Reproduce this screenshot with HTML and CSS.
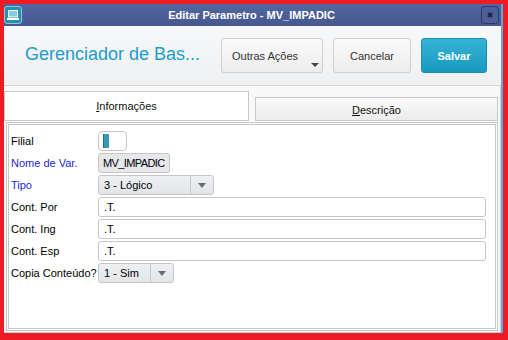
FILE: index.html
```html
<!DOCTYPE html>
<html lang="pt">
<head>
<meta charset="utf-8">
<title>Editar Parametro</title>
<link rel="stylesheet" href="styles.css">
</head>
<body>
<div class="window">
  <div class="titlebar">
    <span class="app-icon">
      <svg width="18" height="18" viewBox="0 0 18 18">
        <rect x="0.5" y="0.5" width="17" height="17" rx="2.5" fill="#2a8db1" stroke="#86c9dc"/>
        <rect x="4.5" y="4.5" width="9" height="6.5" fill="#7fcbe0" stroke="#ffffff"/>
        <rect x="3" y="12" width="12" height="2" fill="#ffffff"/>
      </svg>
    </span>
    <span class="title">Editar Parametro - MV_IMPADIC</span>
    <span class="close">
      <svg width="18" height="18" viewBox="0 0 18 18">
        <rect x="0.5" y="0.5" width="17" height="17" rx="3" fill="#4d5f96" stroke="#2c3b68"/>
        <path d="M7 7 L11 11 M11 7 L7 11" stroke="#1b2440" stroke-width="2"/>
      </svg>
    </span>
  </div>
  <div class="header">
    <div class="heading">Gerenciador de Bas...</div>
    <button class="btn btn-more">Outras Ações<span class="caret"></span></button>
    <button class="btn btn-cancel">Cancelar</button>
    <button class="btn btn-save">Salvar</button>
  </div>
  <div class="body">
    <div class="tabs">
      <div class="tab tab-active"><u>I</u>nformações</div>
      <div class="tab tab-idle"><u>D</u>escrição</div>
    </div>
    <div class="panel">
      <div class="form">
        <label class="lbl">Filial</label>
        <div class="toggle"><span class="toggle-bar"></span></div>

        <label class="lbl lbl-req">Nome de Var.</label>
        <div class="input input-ro input-name">MV_IMPADIC</div>

        <label class="lbl lbl-req">Tipo</label>
        <div class="select select-tipo"><span class="select-val">3 - Lógico</span><span class="select-arrow"><i></i></span></div>

        <label class="lbl">Cont. Por</label>
        <div class="input input-wide">.T.</div>

        <label class="lbl">Cont. Ing</label>
        <div class="input input-wide">.T.</div>

        <label class="lbl">Cont. Esp</label>
        <div class="input input-wide">.T.</div>

        <label class="lbl">Copia Conteúdo?</label>
        <div class="select select-copia"><span class="select-val">1 - Sim</span><span class="select-arrow"><i></i></span></div>
      </div>
    </div>
  </div>
</div>
</body>
</html>
```

FILE: styles.css
```css
* { box-sizing: border-box; }
html, body { margin: 0; padding: 0; }
body {
  width: 508px;
  height: 340px;
  background: #ed1c24;
  font-family: "Liberation Sans", Arial, sans-serif;
  font-size: 11px;
  color: #000;
  overflow: hidden;
}
.window {
  margin: 4px 0 0 4px;
  width: 499px;
  height: 329px;
  border-right: 2px solid #5aa9e3;
  display: flex;
  flex-direction: column;
  background: #f9f9f9;
}
.titlebar {
  height: 22px;
  display: flex;
  align-items: center;
  background: linear-gradient(#53679f, #45588f);
}
.app-icon { width: 18px; height: 18px; display: block; }
.app-icon svg, .close svg { display: block; }
.title {
  flex: 1;
  text-align: center;
  color: #fff;
  font-weight: bold;
  font-size: 11px;
}
.close { width: 18px; height: 18px; margin-right: 2px; }

.header {
  height: 60px;
  display: flex;
  align-items: center;
  padding: 0 0 0 21px;
  background: linear-gradient(#f7f8f9, #eef0f2);
  border-bottom: 1px solid #d4d4d4;
}
.heading {
  flex: 1;
  font-size: 18px;
  color: #1f9dca;
  padding-bottom: 2px;
}
.btn {
  font-family: "Liberation Sans", Arial, sans-serif;
  font-size: 11px;
  height: 35px;
  border-radius: 3px;
  border: 1px solid #cfcfcf;
  background: linear-gradient(#fbfbfb, #ececec);
  color: #333;
  padding: 0;
  margin: 0 0 0 10px;
  position: relative;
}
.btn-more { width: 102px; text-align: left; padding-left: 10px; margin-left: 0; }
.caret {
  position: absolute;
  right: 3px;
  bottom: 5px;
  width: 0; height: 0;
  border-left: 4px solid transparent;
  border-right: 4px solid transparent;
  border-top: 4px solid #444;
}
.btn-cancel { width: 78px; }
.btn-save {
  width: 66px;
  margin-right: 14px;
  color: #fff;
  font-weight: bold;
  border-color: #1990b6;
  background: linear-gradient(#36b3d4, #1799c0);
}

.body {
  flex: 1;
  display: flex;
  flex-direction: column;
  padding-top: 5px;
  border-right: 1px solid #cdcdcd;
  border-bottom: 1px solid #cdcdcd;
}
.tabs {
  height: 30px;
  display: flex;
  align-items: flex-end;
}
.tab {
  display: flex;
  align-items: center;
  justify-content: center;
  border: 1px solid #c8c8c8;
  color: #111;
}
.tab u { text-decoration: underline; }
.tab-active {
  width: 245px;
  height: 30px;
  background: #fff;
}
.tab-idle {
  width: 243px;
  height: 24px;
  margin-left: 6px;
  background: linear-gradient(#fafafa, #ececec);
  padding-top: 1px;
}
.panel {
  margin: 1px 2px 1px 2px;
  flex: 1;
  border: 3px double #c6c6c6;
  background: #fff;
  padding: 6px 9px 0 2px;
}
.form {
  display: grid;
  grid-template-columns: 87px 1fr;
  grid-auto-rows: 20px;
  row-gap: 2px;
  align-items: center;
}
.lbl { white-space: nowrap; }
.lbl-req { color: #2626d9; }
.toggle {
  width: 29px;
  height: 20px;
  border: 1px solid #c6c6c6;
  border-radius: 4px;
  background: #fff;
  padding: 2px 0 0 4px;
}
.toggle-bar {
  display: block;
  width: 6px;
  height: 14px;
  background: #3a9ab6;
  border-left: 1px solid #26748c;
}
.input {
  height: 20px;
  border: 1px solid #c6c6c6;
  border-radius: 3px;
  background: #fff;
  padding: 0 0 0 5px;
  line-height: 18px;
  white-space: nowrap;
  justify-self: start;
}
.input-ro { background: #e6e8ec; padding-left: 4px; }
.input-name { width: 72px; letter-spacing: -0.6px; overflow: hidden; }
.input-wide { width: 388px; }
.select {
  height: 20px;
  border: 1px solid #c6c6c6;
  border-radius: 3px;
  background: linear-gradient(#eef0f3, #e2e5e9);
  display: flex;
  justify-self: start;
}
.select-val { flex: 1; line-height: 18px; padding-left: 5px; white-space: nowrap; }
.select-arrow {
  width: 23px;
  border-left: 1px solid #c6c6c6;
  display: flex;
  align-items: center;
  justify-content: center;
}
.select-arrow i {
  width: 0; height: 0;
  border-left: 4px solid transparent;
  border-right: 4px solid transparent;
  border-top: 5px solid #6a6a6a;
}
.select-tipo { width: 116px; }
.select-copia { width: 76px; }
```
